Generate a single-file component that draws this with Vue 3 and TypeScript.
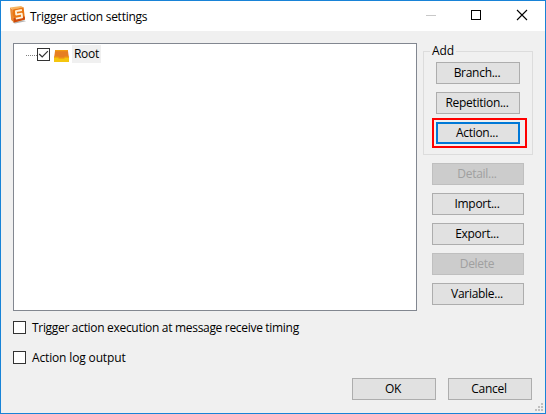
<script setup lang="ts">
import { ref } from 'vue'

interface SideButton {
  label: string
  disabled?: boolean
}

const addButtons = ['Branch...', 'Repetition...', 'Action...']
const sideButtons: SideButton[] = [
  { label: 'Detail...', disabled: true },
  { label: 'Import...' },
  { label: 'Export...' },
  { label: 'Delete', disabled: true },
  { label: 'Variable...' },
]
const rootChecked = ref(true)
const onReceive = ref(false)
const logOutput = ref(false)
</script>

<template>
  <div class="window">
    <header class="titlebar">
      <svg class="logo" width="18" height="18" viewBox="0 0 18 18">
        <path d="M3.5 16.4 14.5 14.2 17 15.2 6 17.6Z" fill="#777" opacity=".55" />
        <path d="M1 1.6 3.6 3.6 5 16.6 2.2 14Z" fill="#e98a35" />
        <path d="M1 1.6 12 0 14.6 1.4 3.6 3.6Z" fill="#f6b662" />
        <path d="M3.4 3.5 14.6 1.3 16 13.6 4.8 16.6Z" fill="#ea7612" />
        <path d="M4.5 12.3 15.8 10.4 16 13.6 4.8 16.6Z" fill="#cf4a0c" />
        <path d="M12.9 4 6.9 5.1 7.2 8.7 12.7 7.7 13.1 11.3 6.8 12.7" fill="none" stroke="#fff3dc" stroke-width="1.8" stroke-linejoin="round" />
      </svg>
      <span class="title">Trigger action settings</span>
      <svg class="controls" width="112" height="30" viewBox="0 0 112 30" shape-rendering="crispEdges">
        <path d="M1 14.5h10" stroke="#c8c8c8" />
        <rect x="46.5" y="9.5" width="9" height="9" fill="none" stroke="#000" />
        <path d="m92 9 10 10m0-10L92 19" stroke="#000" stroke-width="1.1" shape-rendering="auto" />
      </svg>
    </header>
    <main class="content">
      <section class="left">
        <div class="tree">
          <div class="node">
            <i class="branch"></i>
            <button class="box" @click="rootChecked = !rootChecked">
              <svg v-if="rootChecked" width="11" height="11" viewBox="0 0 11 11"><path d="m1.2 5 3 3 5.7-5.8" fill="none" stroke="#333" stroke-width="1.2" /></svg>
            </button>
            <svg class="tray" width="15" height="12" viewBox="0 0 15 12">
              <path d="M1.2 0h12.6L15 8H0Z" fill="#e67e22" />
              <path d="M1.2 0h12.6l.2 1.2H1Z" fill="#f39c12" />
              <path d="M0 7h4.2l.8 1h5l.8-1H15v5H0Z" fill="#f4c50f" />
              <path d="M0 6.4h4.4l.8 1h4.6l.8-1H15v1.4h-4l-.8 1H4.8l-.8-1H0Z" fill="#f09a12" />
            </svg>
            <span class="node-label">Root</span>
          </div>
        </div>
        <label class="check first" @click="onReceive = !onReceive">
          <span class="box"><svg v-if="onReceive" width="11" height="11" viewBox="0 0 11 11"><path d="m1.2 5 3 3 5.7-5.8" fill="none" stroke="#333" /></svg></span>
          <span class="check-long">Trigger action execution at message receive timing</span>
        </label>
        <label class="check" @click="logOutput = !logOutput">
          <span class="box"><svg v-if="logOutput" width="11" height="11" viewBox="0 0 11 11"><path d="m1.2 5 3 3 5.7-5.8" fill="none" stroke="#333" /></svg></span>
          <span>Action log output</span>
        </label>
      </section>
      <aside class="right">
        <div class="group">
          <span class="legend">Add</span>
          <div v-for="label in addButtons" :key="label" class="slot" :class="{ marked: label === 'Action...' }">
            <button class="btn" :class="{ focused: label === 'Action...' }">{{ label }}</button>
          </div>
        </div>
        <div class="side">
          <button v-for="b in sideButtons" :key="b.label" class="btn wide" :disabled="b.disabled">{{ b.label }}</button>
        </div>
      </aside>
    </main>
    <footer class="footer">
      <button class="btn">OK</button>
      <button class="btn">Cancel</button>
    </footer>
    <svg class="grip" width="8" height="8" viewBox="0 0 8 8" fill="#bfbfbf" shape-rendering="crispEdges">
      <path d="M6 0h2v2H6zM3 3h2v2H3zM6 3h2v2H6zM0 6h2v2H0zM3 6h2v2H3zM6 6h2v2H6z" />
    </svg>
  </div>
</template>

<style>
body {
  margin: 0;
}
</style>

<style scoped>
.window {
  position: relative;
  box-sizing: border-box;
  width: 546px;
  height: 414px;
  border: 1px solid #1883d7;
  background: #f0f0f0;
  color: #000;
  font: 12px/16px "Open Sans", "Noto Sans", sans-serif;
  letter-spacing: -0.15px;
  display: flex;
  flex-direction: column;
  overflow: hidden;
}
.titlebar {
  height: 30px;
  background: #fff;
  display: flex;
  align-items: center;
  flex: none;
}
.logo {
  margin: 0 3px 2px 8px;
}
.title {
  white-space: nowrap;
  letter-spacing: -0.27px;
  padding-top: 1px;
}
.controls {
  margin-left: auto;
  margin-right: 8px;
}
.content {
  display: flex;
  padding: 12px 12px 0;
  gap: 6px;
}
.left {
  width: 404px;
}
.tree {
  box-sizing: border-box;
  height: 268px;
  border: 1px solid #828790;
  background: #fff;
  padding: 1px 0 0 12px;
}
.node {
  display: flex;
  align-items: center;
  height: 18px;
}
.branch {
  width: 11px;
  height: 1px;
  margin-top: 2px;
  background: repeating-linear-gradient(90deg, #808080 0 1px, transparent 1px 2px);
}
.box {
  box-sizing: border-box;
  width: 13px;
  height: 13px;
  padding: 0;
  border: 1px solid #333;
  background: #fff;
  display: block;
  flex: none;
}
.box svg {
  display: block;
}
.tray {
  margin: 4px 3px 0 4px;
}
.node-label {
  box-sizing: border-box;
  width: 29px;
  height: 18px;
  line-height: 18px;
  padding: 0 2px;
  letter-spacing: -0.3px;
  background: #f0f0f0;
}
.check {
  display: flex;
  align-items: center;
  gap: 6px;
  height: 13px;
  margin-top: 17px;
  white-space: nowrap;
}
.check.first {
  margin-top: 10px;
}
.check-long {
  letter-spacing: -0.31px;
}
.right {
  width: 110px;
  padding-top: 8px;
}
.group {
  position: relative;
  box-sizing: border-box;
  height: 104px;
  border: 1px solid #dcdcdc;
  padding: 10px 12px 0;
}
.legend {
  position: absolute;
  left: 6px;
  top: -9px;
  padding: 0 2px;
  background: #f0f0f0;
}
.slot {
  height: 30px;
}
.marked {
  box-sizing: border-box;
  width: 95px;
  border: 2px solid #f00;
  margin: -4px 0 0 -4px;
  padding: 2px;
}
.btn {
  box-sizing: border-box;
  display: block;
  width: 84px;
  height: 22px;
  padding: 0 2px 1px 0;
  border: 1px solid #adadad;
  background: #e1e1e1;
  color: #000;
  font: inherit;
  letter-spacing: -0.28px;
  line-height: 18px;
  text-align: center;
}
.focused {
  border: 2px solid #0078d7;
  line-height: 16px;
}
.wide {
  width: 92px;
}
.btn:disabled {
  background: #ccc;
  border-color: #bfbfbf;
  color: #a0a0a0;
}
.side {
  display: flex;
  flex-direction: column;
  gap: 8px;
  padding: 8px 0 0 9px;
}
.footer {
  display: flex;
  justify-content: flex-end;
  gap: 12px;
  margin-top: auto;
  padding: 0 13px 13px;
}
.grip {
  position: absolute;
  right: 2px;
  bottom: 2px;
}
</style>
